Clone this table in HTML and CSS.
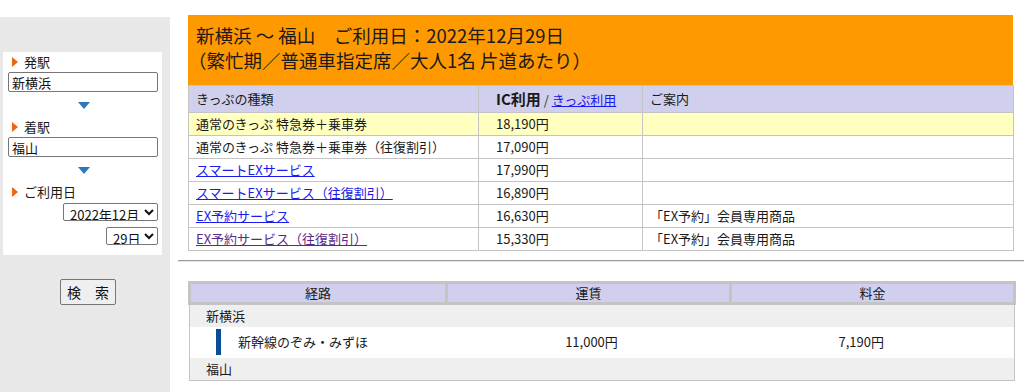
FILE: index.html
```html
<!DOCTYPE html>
<html lang="ja">
<head>
<meta charset="utf-8">
<title>運賃検索</title>
<link rel="stylesheet" href="styles.css">
</head>
<body>
<div class="page">
  <aside class="side">
    <div class="panel">
      <div class="lbl"><span class="tri"></span>発駅</div>
      <input class="station" type="text" value="新横浜">
      <div class="down"><span class="dtri"></span></div>
      <div class="lbl"><span class="tri"></span>着駅</div>
      <input class="station" type="text" value="福山">
      <div class="down"><span class="dtri"></span></div>
      <div class="lbl"><span class="tri"></span>ご利用日</div>
      <div class="sel-row"><select class="sel sel-month"><option>2022年12月</option></select></div>
      <div class="sel-row sel-row2"><select class="sel sel-day"><option>29日</option></select></div>
    </div>
    <div class="btn-row"><button class="search" type="button">検　索</button></div>
  </aside>

  <main class="main">
    <div class="title">
      <div class="t1">新横浜 ～ 福山　ご利用日：2022年12月29日</div>
      <div class="t2">（繁忙期／普通車指定席／大人1名 片道あたり）</div>
    </div>
    <table class="fare">
      <thead>
        <tr>
          <th class="c1">きっぷの種類</th>
          <th class="c2"><b class="ic">IC利用</b> <span class="slash">/</span> <a href="#" class="link">きっぷ利用</a></th>
          <th class="c3">ご案内</th>
        </tr>
      </thead>
      <tbody>
        <tr class="hl">
          <td class="c1">通常のきっぷ 特急券＋乗車券</td>
          <td class="c2">18,190円</td>
          <td class="c3"></td>
        </tr>
        <tr>
          <td class="c1">通常のきっぷ 特急券＋乗車券（往復割引）</td>
          <td class="c2">17,090円</td>
          <td class="c3"></td>
        </tr>
        <tr>
          <td class="c1"><a href="#" class="link">スマートEXサービス</a></td>
          <td class="c2">17,990円</td>
          <td class="c3"></td>
        </tr>
        <tr>
          <td class="c1"><a href="#" class="link">スマートEXサービス（往復割引）</a></td>
          <td class="c2">16,890円</td>
          <td class="c3"></td>
        </tr>
        <tr>
          <td class="c1"><a href="#" class="link">EX予約サービス</a></td>
          <td class="c2">16,630円</td>
          <td class="c3">「EX予約」会員専用商品</td>
        </tr>
        <tr>
          <td class="c1"><a href="#" class="link visited">EX予約サービス（往復割引）</a></td>
          <td class="c2">15,330円</td>
          <td class="c3">「EX予約」会員専用商品</td>
        </tr>
      </tbody>
    </table>

    <hr class="rule">

    <table class="route">
      <thead>
        <tr>
          <th class="r1">経路</th>
          <th class="r2">運賃</th>
          <th class="r3">料金</th>
        </tr>
      </thead>
      <tbody>
        <tr class="stn"><td colspan="3">新横浜</td></tr>
        <tr class="line">
          <td class="line-name"><span class="bar"></span><span class="line-text">新幹線のぞみ・みずほ</span></td>
          <td class="amt amt2">11,000円</td>
          <td class="amt amt3">7,190円</td>
        </tr>
        <tr class="stn"><td colspan="3">福山</td></tr>
      </tbody>
    </table>
  </main>
</div>
</body>
</html>
```

FILE: styles.css
```css
* { box-sizing: border-box; }

html, body {
  margin: 0;
  padding: 0;
  background: #ffffff;
}

body {
  font-family: "Noto Sans CJK JP", "Noto Sans", sans-serif;
  font-size: 13px;
  color: #1a1a1a;
}

.page {
  display: flex;
  align-items: flex-start;
}

/* ---------- sidebar ---------- */
.side {
  width: 170px;
  margin-top: 17px;
  min-height: 375px;
  background: #e8e8e8;
  padding: 35px 8px 0 3px;
}

.panel {
  background: #ffffff;
  padding: 1px 4px 10px 5px;
  display: flex;
  flex-direction: column;
}

.lbl {
  height: 18px;
  line-height: 18px;
  font-size: 13px;
  display: flex;
  align-items: center;
  padding-left: 4px;
}

.tri {
  width: 0;
  height: 0;
  border-top: 5px solid transparent;
  border-bottom: 5px solid transparent;
  border-left: 6px solid #ee6611;
  margin-right: 6px;
}

.station {
  margin-top: 1px;
  width: 150px;
  height: 20px;
  border: 1px solid #767676;
  border-radius: 2px;
  padding: 0 3px;
  font-family: inherit;
  font-size: 13px;
  color: #111111;
}

.down {
  height: 26px;
  display: flex;
  align-items: center;
  justify-content: center;
  padding-left: 2px;
}

.dtri {
  width: 0;
  height: 0;
  border-left: 6px solid transparent;
  border-right: 6px solid transparent;
  border-top: 7px solid #2d78b8;
}

.sel-row {
  margin-top: 2px;
  display: flex;
  justify-content: flex-end;
}

.sel-row2 { margin-top: 6px; }

.sel {
  height: 18px;
  font-family: inherit;
  font-size: 13px;
  line-height: 16px;
  border: 1px solid #767676;
  border-radius: 2px;
  padding: 0 0 0 2px;
  background: #ffffff;
  color: #111111;
}

.sel-month { width: 95px; }
.sel-day { width: 52px; }

.btn-row {
  display: flex;
  justify-content: flex-start;
  padding-top: 24px;
  padding-left: 57px;
}

.search {
  width: 56px;
  height: 26px;
  font-family: inherit;
  font-size: 14px;
  background: #efefef;
  border: 1px solid #767676;
  border-radius: 2px;
  color: #111111;
  padding: 0;
}

/* ---------- main ---------- */
.main {
  width: 846px;
  margin-left: 8px;
  padding-top: 15px;
}

.title {
  width: 825px;
  height: 70px;
  margin-left: 10px;
  background: #ff9900;
  padding: 8px 8px 0 8px;
  font-size: 18.5px;
  line-height: 25px;
  color: #1a1a1a;
}

.t2 { margin-left: -8px; }

.fare {
  width: 825px;
  margin-left: 10px;
  border-collapse: collapse;
  table-layout: fixed;
  font-size: 13px;
  border: 1px solid #c4c4c4;
}

.fare th,
.fare td {
  border: 1px solid #c4c4c4;
  text-align: left;
  font-weight: normal;
  padding: 0 7px;
  white-space: nowrap;
}

.fare th {
  background: #d0d0ee;
  height: 27px;
  line-height: 20px;
}

.fare td {
  height: 23px;
  line-height: 20px;
}

.fare .c1 { width: 290px; }
.fare .c2 { width: 164px; padding-left: 17px; }
.fare .c3 { width: 371px; }

.fare tr.hl td { background: #ffffc0; }

.ic {
  font-size: 15px;
  font-weight: bold;
}

.slash { color: #333333; }

.link {
  color: #1a1aee;
  text-decoration: underline;
}

.link.visited { color: #5a2a8a; }

.rule {
  width: 846px;
  margin: 9px 0 0 0;
  height: 2px;
  border: 0;
  border-top: 1px solid #9a9a9a;
  border-bottom: 1px solid #e4e4e4;
}

.route {
  width: 825px;
  margin: 19px 0 0 10px;
  border-collapse: collapse;
  table-layout: fixed;
  font-size: 13px;
  border: 1px solid #c4c4c4;
}

.route th {
  background: #d0d0ee;
  border: 3px solid #c4c4c4;
  font-weight: normal;
  text-align: center;
  height: 20px;
  line-height: 18px;
  padding: 0;
}

.route .r1 { width: 257px; }
.route .r2 { width: 284px; }
.route .r3 { width: 284px; }

.route .stn td {
  background: #efefef;
  height: 23px;
  line-height: 20px;
  padding: 0 0 0 16px;
}

.route .line td {
  background: #ffffff;
  height: 31px;
  line-height: 20px;
}

.line-name {
  padding: 0 0 0 26px;
}

.bar {
  display: inline-block;
  width: 5px;
  height: 26px;
  background: #0b4c97;
  vertical-align: middle;
  margin-right: 17px;
}

.line-text { vertical-align: middle; }

.amt {
  text-align: center;
  padding: 0;
}

.amt2 { padding-left: 6px; }
.amt3 { padding-right: 22px; }
```
